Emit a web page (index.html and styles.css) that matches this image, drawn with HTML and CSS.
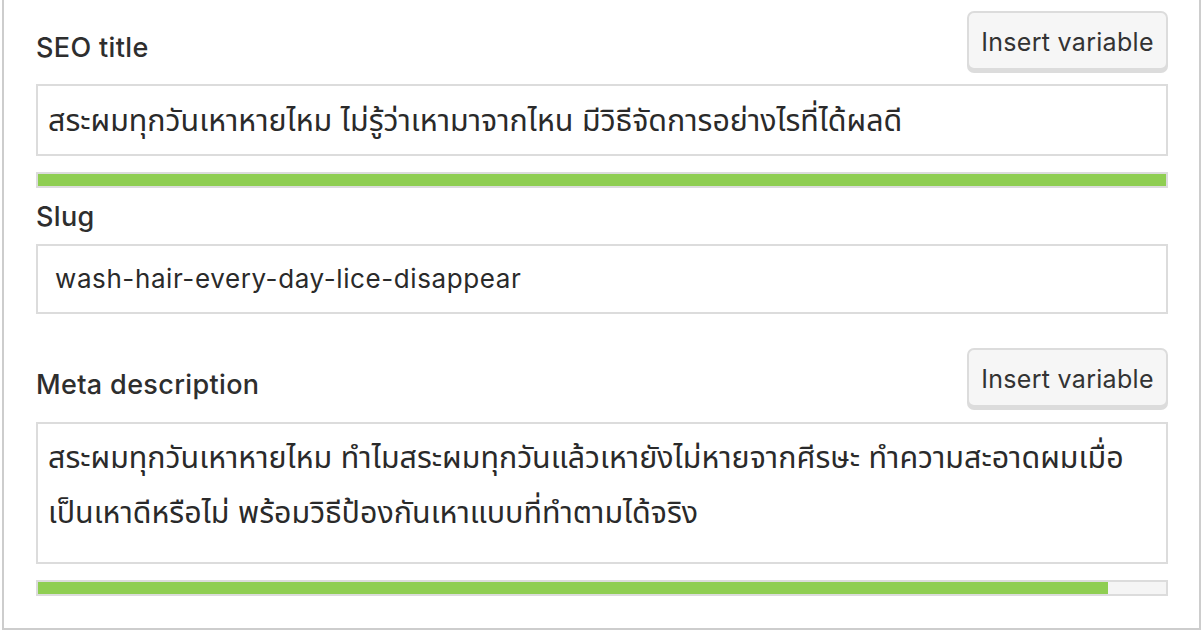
FILE: index.html
```html
<!DOCTYPE html>
<html lang="th">
<head>
<meta charset="utf-8">
<title>SEO fields</title>
<link rel="stylesheet" href="styles.css">
</head>
<body>
<div class="panel">
  <div class="field-head">
    <label class="label">SEO title</label>
    <button class="btn">Insert variable</button>
  </div>
  <div class="input thai">สระผมทุกวันเหาหายไหม ไม่รู้ว่าเหามาจากไหน มีวิธีจัดการอย่างไรที่ได้ผลดี</div>
  <div class="progress"><div class="fill" style="width:100%"></div></div>

  <div class="field-head plain">
    <label class="label">Slug</label>
  </div>
  <div class="input slug">wash-hair-every-day-lice-disappear</div>

  <div class="field-head meta">
    <label class="label">Meta description</label>
    <button class="btn">Insert variable</button>
  </div>
  <div class="input thai textarea">สระผมทุกวันเหาหายไหม ทำไมสระผมทุกวันแล้วเหายังไม่หายจากศีรษะ ทำความสะอาดผมเมื่อเป็นเหาดีหรือไม่ พร้อมวิธีป้องกันเหาแบบที่ทำตามได้จริง</div>
  <div class="progress"><div class="fill" style="width:94.9%"></div></div>
</div>
</body>
</html>
```
FILE: styles.css
```css
* { box-sizing: border-box; }
html, body { margin: 0; padding: 0; background: #fff; }
body {
  font-family: "Inter", "Noto Sans Thai", "Noto Sans", "DejaVu Sans", sans-serif;
  color: #303030;
  width: 1204px;
  height: 630px;
  overflow: hidden;
}
.panel {
  margin-left: 2px;
  width: 1199px;
  height: 630px;
  border: 2px solid #cdcdcd;
  border-top: none;
  padding: 0 31px 0 32px;
}
.field-head {
  display: flex;
  justify-content: space-between;
  align-items: flex-end;
}
.label {
  font-size: 27px;
  font-weight: 500;
  letter-spacing: 0.35px;
  line-height: 32px;
  margin-bottom: 20px;
  color: #2e2e2e;
}
.btn {
  margin-top: 11px;
  margin-bottom: 14px;
  height: 59px;
  width: 201px;
  padding: 3px 0 0;
  font-family: inherit;
  font-size: 25px;
  letter-spacing: 0.3px;
  color: #333;
  background: #f6f6f6;
  border: 2px solid #dcdcdc;
  border-radius: 7px;
  box-shadow: 0 3px 0 #dcdcdc;
}
.field-head.plain .label { margin-top: 13px; margin-bottom: 11px; }
.field-head.meta .btn { margin-top: 34px; margin-bottom: 15px; }
.field-head.meta .label { margin-bottom: 21px; }
.input {
  border: 2px solid #dcdcdc;
  height: 72px;
  padding: 0 10px;
  font-size: 24px;
  line-height: 68px;
  color: #2a2a2a;
  white-space: nowrap;
  overflow: hidden;
}
.input.thai { font-size: 30.4px; }
.input.slug {
  height: 70px;
  line-height: 66px;
  padding-left: 17px;
  font-size: 26px;
  letter-spacing: 0.6px;
}
.input.textarea {
  height: 142px;
  white-space: normal;
  line-height: 55px;
  padding: 6px 24px 0 10px;
}
.progress {
  margin-top: 16px;
  height: 16px;
  border: 2px solid #dcdcdc;
  background: #f5f5f5;
}
.fill { height: 100%; background: #8fce52; }
```
